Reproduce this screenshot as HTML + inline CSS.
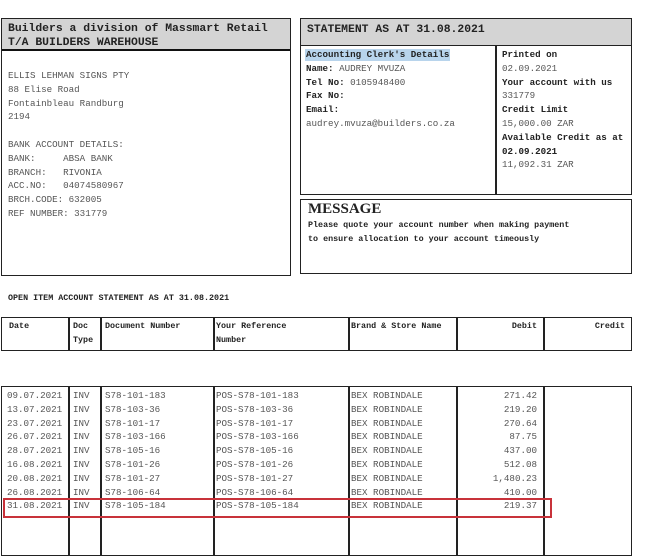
<!DOCTYPE html>
<html><head><meta charset="utf-8"><style>
*{margin:0;padding:0;box-sizing:border-box}
body{width:655px;height:539px;background:#fff;position:relative;overflow:hidden;font-family:"Liberation Mono","Courier New",monospace;font-size:9.2px;color:#555}
.a{position:absolute;white-space:pre;line-height:13.8px}
.box{position:absolute;border:1.5px solid #222}
.b{font-weight:bold;color:#222}
.v{position:absolute;width:1.5px;background:#222}
</style></head><body>
<!-- left box -->
<div class="box" style="left:1px;top:18px;width:290px;height:258px"></div>
<div style="position:absolute;left:2px;top:19px;width:288px;height:32px;background:#d4d4d4;border-bottom:2.5px solid #111"></div>
<div class="a b" style="left:8px;top:22px;font-size:11.4px;line-height:14px">Builders a division of Massmart Retail
T/A BUILDERS WAREHOUSE</div>
<div class="a" style="left:8px;top:69px">ELLIS LEHMAN SIGNS PTY
88 Elise Road
Fontainbleau Randburg
2194

BANK ACCOUNT DETAILS:
BANK:     ABSA BANK
BRANCH:   RIVONIA
ACC.NO:   04074580967
BRCH.CODE: 632005
REF NUMBER: 331779</div>
<!-- right top box -->
<div class="box" style="left:300px;top:18px;width:332px;height:177px"></div>
<div style="position:absolute;left:301px;top:19px;width:330px;height:27px;background:#d4d4d4;border-bottom:1.5px solid #222"></div>
<div class="a b" style="left:307px;top:20px;font-size:11.4px;line-height:20px">STATEMENT AS AT 31.08.2021</div>
<div class="v" style="left:495px;top:46px;height:148px"></div>
<div style="position:absolute;left:305px;top:49px;width:145px;height:12px;background:#b8d4ec"></div>
<div class="a" style="left:306px;top:48px"><span class="b">Accounting Clerk's Details
Name:</span> AUDREY MVUZA
<span class="b">Tel No:</span> 0105948400
<span class="b">Fax No:
Email:</span>
audrey.mvuza@builders.co.za</div>
<div class="a" style="left:502px;top:48px"><span class="b">Printed on</span>
02.09.2021
<span class="b">Your account with us</span>
331779
<span class="b">Credit Limit</span>
15,000.00 ZAR
<span class="b">Available Credit as at
02.09.2021</span>
11,092.31 ZAR</div>
<!-- message -->
<div class="box" style="left:300px;top:199px;width:332px;height:75px"></div>
<div class="a b" style="left:308px;top:200px;font-family:'Liberation Serif',serif;font-size:15px;line-height:18px">MESSAGE</div>
<div class="a b" style="left:308px;top:218px;font-size:8.4px;line-height:14px">Please quote your account number when making payment
to ensure allocation to your account timeously</div>
<div class="a b" style="left:8px;top:292px;font-size:8.4px">OPEN ITEM ACCOUNT STATEMENT AS AT 31.08.2021</div>
<!-- header table -->
<div class="box" style="left:1px;top:317px;width:631px;height:34px"></div>
<div class="v" style="left:68px;top:317px;height:34px"></div>
<div class="v" style="left:100px;top:317px;height:34px"></div>
<div class="v" style="left:213px;top:317px;height:34px"></div>
<div class="v" style="left:348px;top:317px;height:34px"></div>
<div class="v" style="left:456px;top:317px;height:34px"></div>
<div class="v" style="left:543px;top:317px;height:34px"></div>
<div class="a b" style="left:9px;top:320px;font-size:8.4px">Date</div>
<div class="a b" style="left:73px;top:320px;font-size:8.4px">Doc
Type</div>
<div class="a b" style="left:105px;top:320px;font-size:8.4px">Document Number</div>
<div class="a b" style="left:216px;top:320px;font-size:8.4px">Your Reference
Number</div>
<div class="a b" style="left:351px;top:320px;font-size:8.4px">Brand &amp; Store Name</div>
<div class="a b" style="left:460px;top:320px;width:77px;text-align:right;font-size:8.4px">Debit</div>
<div class="a b" style="left:546px;top:320px;width:79px;text-align:right;font-size:8.4px">Credit</div>
<!-- body table -->
<div style="position:absolute;left:1px;top:386px;width:631px;height:170px;border:1.5px solid #222"></div>
<div class="v" style="left:68px;top:386px;height:170px"></div>
<div class="v" style="left:100px;top:386px;height:170px"></div>
<div class="v" style="left:213px;top:386px;height:170px"></div>
<div class="v" style="left:348px;top:386px;height:170px"></div>
<div class="v" style="left:456px;top:386px;height:170px"></div>
<div class="v" style="left:543px;top:386px;height:170px"></div>
<div class="a" style="left:7px;top:389px">09.07.2021
13.07.2021
23.07.2021
26.07.2021
28.07.2021
16.08.2021
20.08.2021
26.08.2021
31.08.2021</div>
<div class="a" style="left:73px;top:389px">INV
INV
INV
INV
INV
INV
INV
INV
INV</div>
<div class="a" style="left:105px;top:389px">S78-101-183
S78-103-36
S78-101-17
S78-103-166
S78-105-16
S78-101-26
S78-101-27
S78-106-64
S78-105-184</div>
<div class="a" style="left:216px;top:389px">POS-S78-101-183
POS-S78-103-36
POS-S78-101-17
POS-S78-103-166
POS-S78-105-16
POS-S78-101-26
POS-S78-101-27
POS-S78-106-64
POS-S78-105-184</div>
<div class="a" style="left:351px;top:389px">BEX ROBINDALE
BEX ROBINDALE
BEX ROBINDALE
BEX ROBINDALE
BEX ROBINDALE
BEX ROBINDALE
BEX ROBINDALE
BEX ROBINDALE
BEX ROBINDALE</div>
<div class="a" style="left:460px;top:389px;width:77px;text-align:right">271.42
219.20
270.64
87.75
437.00
512.08
1,480.23
410.00
219.37</div>
<div style="position:absolute;left:3px;top:498px;width:549px;height:20px;border:2.5px solid #c8323a"></div>
</body></html>
